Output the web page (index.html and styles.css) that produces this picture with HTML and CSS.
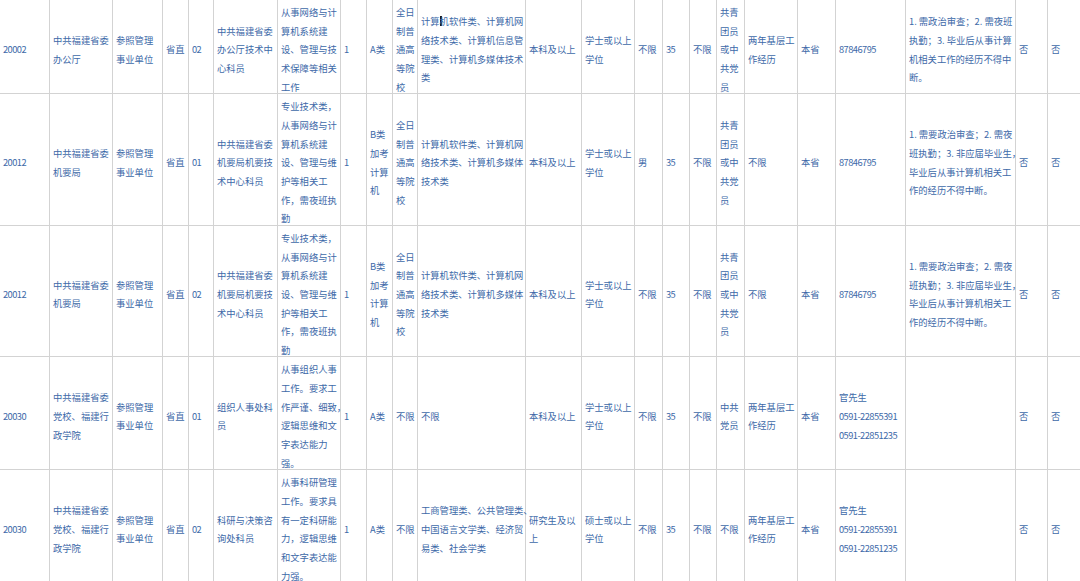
FILE: index.html
```html
<!DOCTYPE html>
<html lang="zh-CN">
<head>
<meta charset="utf-8">
<title>职位表</title>
<link rel="stylesheet" href="styles.css">
</head>
<body>
<table class="grid">
  <colgroup>
    <col class="c-code"><col class="c-unit"><col class="c-kind"><col class="c-level"><col class="c-pos">
    <col class="c-name"><col class="c-desc"><col class="c-num"><col class="c-cat"><col class="c-edu-type">
    <col class="c-major"><col class="c-edu"><col class="c-degree"><col class="c-sex"><col class="c-age">
    <col class="c-nation"><col class="c-pol"><col class="c-exp"><col class="c-home"><col class="c-tel">
    <col class="c-note"><col class="c-flag"><col class="c-flag2">
  </colgroup>
  <tbody>
    <tr>
      <td><div class="t num">20002</div></td>
      <td><div class="t">中共福建省委<br>办公厅</div></td>
      <td><div class="t">参照管理<br>事业单位</div></td>
      <td><div class="t">省直</div></td>
      <td><div class="t num">02</div></td>
      <td><div class="t">中共福建省委<br>办公厅技术中<br>心科员</div></td>
      <td><div class="t">从事网络与计<br>算机系统建<br>设、管理与技<br>术保障等相关<br>工作</div></td>
      <td><div class="t num">1</div></td>
      <td><div class="t">A类</div></td>
      <td><div class="t">全日<br>制普<br>通高<br>等院<br>校</div></td>
      <td><div class="t">计算<span class="caret"></span>机软件类、计算机网<br>络技术类、计算机信息管<br>理类、计算机多媒体技术<br>类</div></td>
      <td><div class="t">本科及以上</div></td>
      <td><div class="t">学士或以上<br>学位</div></td>
      <td><div class="t">不限</div></td>
      <td><div class="t num">35</div></td>
      <td><div class="t">不限</div></td>
      <td><div class="t">共青<br>团员<br>或中<br>共党<br>员</div></td>
      <td><div class="t">两年基层工<br>作经历</div></td>
      <td><div class="t">本省</div></td>
      <td><div class="t num">87846795</div></td>
      <td><div class="t">1. 需政治审查；2. 需夜班<br>执勤；3. 毕业后从事计算<br>机相关工作的经历不得中<br>断。</div></td>
      <td><div class="t">否</div></td>
      <td><div class="t">否</div></td>
    </tr>
    <tr>
      <td><div class="t num">20012</div></td>
      <td><div class="t">中共福建省委<br>机要局</div></td>
      <td><div class="t">参照管理<br>事业单位</div></td>
      <td><div class="t">省直</div></td>
      <td><div class="t num">01</div></td>
      <td><div class="t">中共福建省委<br>机要局机要技<br>术中心科员</div></td>
      <td><div class="t">专业技术类，<br>从事网络与计<br>算机系统建<br>设、管理与维<br>护等相关工<br>作，需夜班执<br>勤</div></td>
      <td><div class="t num">1</div></td>
      <td><div class="t">B类<br>加考<br>计算<br>机</div></td>
      <td><div class="t">全日<br>制普<br>通高<br>等院<br>校</div></td>
      <td><div class="t">计算机软件类、计算机网<br>络技术类、计算机多媒体<br>技术类</div></td>
      <td><div class="t">本科及以上</div></td>
      <td><div class="t">学士或以上<br>学位</div></td>
      <td><div class="t">男</div></td>
      <td><div class="t num">35</div></td>
      <td><div class="t">不限</div></td>
      <td><div class="t">共青<br>团员<br>或中<br>共党<br>员</div></td>
      <td><div class="t">不限</div></td>
      <td><div class="t">本省</div></td>
      <td><div class="t num">87846795</div></td>
      <td><div class="t">1. 需要政治审查；2. 需夜<br>班执勤；3. 非应届毕业生，<br>毕业后从事计算机相关工<br>作的经历不得中断。</div></td>
      <td><div class="t">否</div></td>
      <td><div class="t">否</div></td>
    </tr>
    <tr>
      <td><div class="t num">20012</div></td>
      <td><div class="t">中共福建省委<br>机要局</div></td>
      <td><div class="t">参照管理<br>事业单位</div></td>
      <td><div class="t">省直</div></td>
      <td><div class="t num">02</div></td>
      <td><div class="t">中共福建省委<br>机要局机要技<br>术中心科员</div></td>
      <td><div class="t">专业技术类，<br>从事网络与计<br>算机系统建<br>设、管理与维<br>护等相关工<br>作，需夜班执<br>勤</div></td>
      <td><div class="t num">1</div></td>
      <td><div class="t">B类<br>加考<br>计算<br>机</div></td>
      <td><div class="t">全日<br>制普<br>通高<br>等院<br>校</div></td>
      <td><div class="t">计算机软件类、计算机网<br>络技术类、计算机多媒体<br>技术类</div></td>
      <td><div class="t">本科及以上</div></td>
      <td><div class="t">学士或以上<br>学位</div></td>
      <td><div class="t">不限</div></td>
      <td><div class="t num">35</div></td>
      <td><div class="t">不限</div></td>
      <td><div class="t">共青<br>团员<br>或中<br>共党<br>员</div></td>
      <td><div class="t">不限</div></td>
      <td><div class="t">本省</div></td>
      <td><div class="t num">87846795</div></td>
      <td><div class="t">1. 需要政治审查；2. 需夜<br>班执勤；3. 非应届毕业生，<br>毕业后从事计算机相关工<br>作的经历不得中断。</div></td>
      <td><div class="t">否</div></td>
      <td><div class="t">否</div></td>
    </tr>
    <tr>
      <td><div class="t num">20030</div></td>
      <td><div class="t">中共福建省委<br>党校、福建行<br>政学院</div></td>
      <td><div class="t">参照管理<br>事业单位</div></td>
      <td><div class="t">省直</div></td>
      <td><div class="t num">01</div></td>
      <td><div class="t">组织人事处科<br>员</div></td>
      <td><div class="t">从事组织人事<br>工作。要求工<br>作严谨、细致，<br>逻辑思维和文<br>字表达能力<br>强。</div></td>
      <td><div class="t num">1</div></td>
      <td><div class="t">A类</div></td>
      <td><div class="t">不限</div></td>
      <td><div class="t">不限</div></td>
      <td><div class="t">本科及以上</div></td>
      <td><div class="t">学士或以上<br>学位</div></td>
      <td><div class="t">不限</div></td>
      <td><div class="t num">35</div></td>
      <td><div class="t">不限</div></td>
      <td><div class="t">中共<br>党员</div></td>
      <td><div class="t">两年基层工<br>作经历</div></td>
      <td><div class="t">本省</div></td>
      <td><div class="t">官先生<br><span class="num">0591-22855391</span><br><span class="num">0591-22851235</span></div></td>
      <td></td>
      <td><div class="t">否</div></td>
      <td><div class="t">否</div></td>
    </tr>
    <tr>
      <td><div class="t num">20030</div></td>
      <td><div class="t">中共福建省委<br>党校、福建行<br>政学院</div></td>
      <td><div class="t">参照管理<br>事业单位</div></td>
      <td><div class="t">省直</div></td>
      <td><div class="t num">02</div></td>
      <td><div class="t">科研与决策咨<br>询处科员</div></td>
      <td><div class="t">从事科研管理<br>工作。要求具<br>有一定科研能<br>力，逻辑思维<br>和文字表达能<br>力强。</div></td>
      <td><div class="t num">1</div></td>
      <td><div class="t">A类</div></td>
      <td><div class="t">不限</div></td>
      <td><div class="t">工商管理类、公共管理类、<br>中国语言文学类、经济贸<br>易类、社会学类</div></td>
      <td><div class="t">研究生及以<br>上</div></td>
      <td><div class="t">硕士或以上<br>学位</div></td>
      <td><div class="t">不限</div></td>
      <td><div class="t num">35</div></td>
      <td><div class="t">不限</div></td>
      <td><div class="t">不限</div></td>
      <td><div class="t">两年基层工<br>作经历</div></td>
      <td><div class="t">本省</div></td>
      <td><div class="t">官先生<br><span class="num">0591-22855391</span><br><span class="num">0591-22851235</span></div></td>
      <td></td>
      <td><div class="t">否</div></td>
      <td><div class="t">否</div></td>
    </tr>
  </tbody>
</table>
</body>
</html>
```
FILE: styles.css
```css
html, body {
  margin: 0;
  padding: 0;
  background: #ffffff;
  overflow: hidden;
}

.grid {
  border-collapse: collapse;
  table-layout: fixed;
  width: 1088px;
  margin: -1px 0 0 -1px;
  font-family: "Noto Sans CJK SC", "Noto Sans", sans-serif;
  font-size: 9.3px;
  line-height: 18.65px;
  color: #3d69a8;
}

.grid td {
  border: 1px solid #d3d3d3;
  padding: 0 3px;
  vertical-align: middle;
  text-align: left;
  white-space: nowrap;
  overflow: visible;
}

/* the text sits a little low in its lines, as in the source table */
.t {
  margin: 3px 0 -3px;
}

.num {
  letter-spacing: -0.55px;
}

.c-code { width: 50px; }
.c-unit { width: 63px; }
.c-kind { width: 50px; }
.c-level { width: 26px; }
.c-pos { width: 25px; }
.c-name { width: 64px; }
.c-desc { width: 63px; }
.c-num { width: 26px; }
.c-cat { width: 26px; }
.c-edu-type { width: 25px; }
.c-major { width: 108px; }
.c-edu { width: 56px; }
.c-degree { width: 53px; }
.c-sex { width: 28px; }
.c-age { width: 27px; }
.c-nation { width: 27px; }
.c-pol { width: 28px; }
.c-exp { width: 53px; }
.c-home { width: 38px; }
.c-tel { width: 70px; }
.c-note { width: 110px; }
.c-flag { width: 32px; }
.c-flag2 { width: 40px; }

.caret {
  display: inline-block;
  width: 2px;
  height: 10px;
  margin-right: -2px;
  background: #1c1c1c;
  vertical-align: -1px;
}
```
